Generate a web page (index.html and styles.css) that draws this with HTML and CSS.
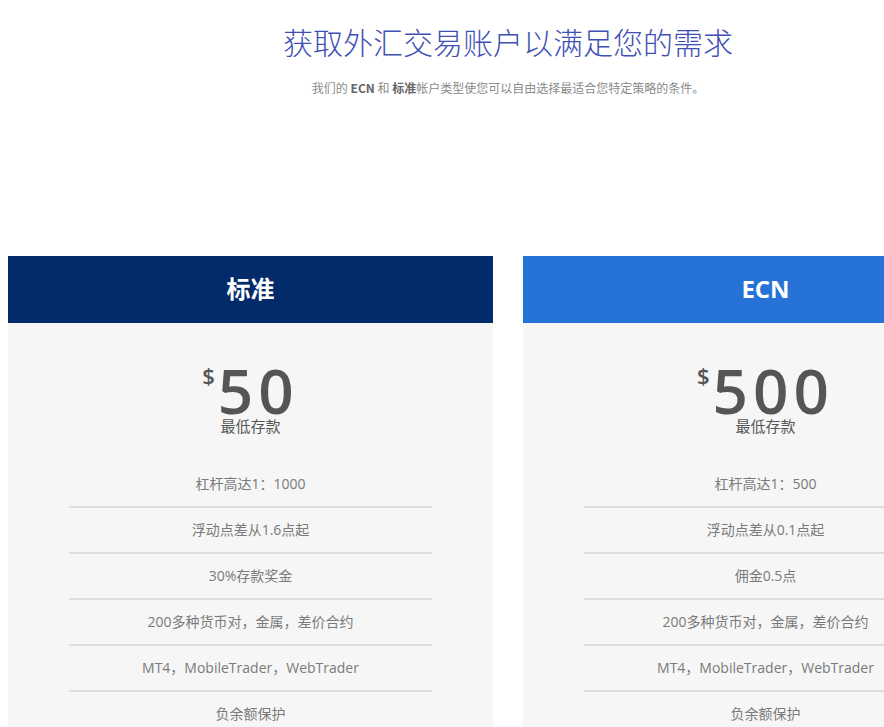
FILE: index.html
```html
<!DOCTYPE html>
<html lang="zh-CN">
<head>
  <meta charset="UTF-8">
  <meta name="viewport" content="width=device-width, initial-scale=1.0">
  <title>外汇交易账户</title>
  <link rel="stylesheet" href="styles.css">
</head>
<body>
  <div class="container">
    <div class="intro">
      <h1>获取外汇交易账户以满足您的需求</h1>
      <p class="lead">我们的 <b>ECN</b> 和 <b>标准</b>帐户类型使您可以自由选择最适合您特定策略的条件。</p>
    </div>

    <div class="plans">
      <div class="plan">
        <div class="plan-head standard">标准</div>
        <div class="plan-body">
          <div class="price"><span class="currency">$</span>50</div>
          <div class="price-label">最低存款</div>
          <ul class="features">
            <li>杠杆高达1：1000</li>
            <li>浮动点差从1.6点起</li>
            <li>30%存款奖金</li>
            <li>200多种货币对，金属，差价合约</li>
            <li>MT4，MobileTrader，WebTrader</li>
            <li>负余额保护</li>
          </ul>
        </div>
      </div>

      <div class="plan">
        <div class="plan-head ecn">ECN</div>
        <div class="plan-body">
          <div class="price"><span class="currency">$</span>500</div>
          <div class="price-label">最低存款</div>
          <ul class="features">
            <li>杠杆高达1：500</li>
            <li>浮动点差从0.1点起</li>
            <li>佣金0.5点</li>
            <li>200多种货币对，金属，差价合约</li>
            <li>MT4，MobileTrader，WebTrader</li>
            <li>负余额保护</li>
          </ul>
        </div>
      </div>
    </div>
  </div>
</body>
</html>
```

FILE: styles.css
```css
html {
  overflow: hidden;
}

body {
  margin: 0;
  font-family: 'Open Sans', 'Noto Sans CJK SC', sans-serif;
  background-color: #ffffff;
}

.container {
  width: 1000px;
  padding: 0 8px;
}

.intro {
  padding-top: 22px;
  text-align: center;
}

h1 {
  margin: 0;
  font-family: 'Noto Sans CJK SC', sans-serif;
  font-size: 30px;
  line-height: 39px;
  font-weight: 300;
  color: #3f50b5;
}

.lead {
  margin: 18px 0 0;
  font-family: 'Noto Sans CJK SC', sans-serif;
  font-size: 12px;
  line-height: 18px;
  color: #8a8a8a;
}

.lead b {
  color: #666666;
}

.plans {
  display: flex;
  gap: 30px;
  margin-top: 159px;
}

.plan {
  width: 485px;
  flex-shrink: 0;
}

.plan-head {
  height: 67px;
  line-height: 66px;
  text-align: center;
  color: #ffffff;
  font-size: 24px;
  font-weight: bold;
}

.plan-head.standard {
  background-color: #032b69;
}

.plan-head.ecn {
  background-color: #2672d6;
}

.plan-body {
  background-color: #f6f6f6;
  padding-top: 40px;
  text-align: center;
  min-height: 420px;
}

.price {
  font-size: 62px;
  line-height: 54px;
  font-weight: 600;
  color: #555555;
  letter-spacing: 5px;
}

.currency {
  font-size: 22px;
  font-weight: 600;
  vertical-align: top;
  position: relative;
  top: -15px;
  margin-right: 3px;
  letter-spacing: 0;
}

.price-label {
  font-size: 15px;
  line-height: 18px;
  color: #555555;
}

.features {
  list-style: none;
  margin: 27px auto 0;
  padding: 0;
  width: 75%;
}

.features li {
  padding: 12px 0;
  line-height: 20px;
  font-size: 14px;
  color: #7a7a7a;
  border-bottom: 2px solid #dddddd;
}
```
